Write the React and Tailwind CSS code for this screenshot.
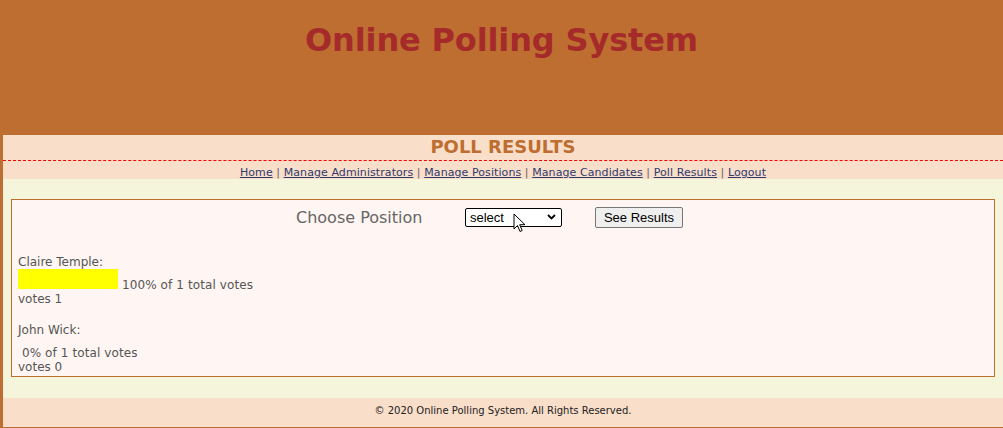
export default function App() {
  const font = { fontFamily: '"DejaVu Sans", Verdana, sans-serif' };
  const links = ["Home", "Manage Administrators", "Manage Positions", "Manage Candidates", "Poll Results", "Logout"];
  const candidates = [
    { name: "Claire Temple", pct: 100, votes: 1 },
    { name: "John Wick", pct: 0, votes: 0 },
  ];
  return (
    <div className="h-[428px] w-full overflow-hidden bg-[#bd6e30] pl-[3px] pb-[1px]" style={font}>
      <div className="-ml-[3px] h-[135px] pt-[22px] text-center">
        <h1 className="text-[32px] font-bold leading-[37px] tracking-[-0.15px] text-[#a52a2a]">Online Polling System</h1>
      </div>
      <div className="flex h-[292px] flex-col">
        <div className="bg-[#f9dec9]">
          <h2 className="h-[26px] border-b border-dashed border-[#ff0000] pt-[1px] text-center text-[18px] font-bold leading-[21px] text-[#bd6e30]">
            POLL RESULTS
          </h2>
          <div className="h-[18px] pt-[5px] text-center text-[11px] leading-[13px] tracking-[0.08px] text-[#666]">
            {links.map((l, i) => (
              <span key={l}>
                {i > 0 && <span> | </span>}
                <a href="#" className="text-[#2e3b6e] underline">{l}</a>
              </span>
            ))}
          </div>
        </div>
        <div className="flex-1 bg-[#f5f5dc] px-[8px] pt-[20px]">
          <div className="h-[178px] border border-[#bd6e30] bg-[#fff5f2] px-[6px] pt-[7px] text-[12px] text-[#555]">
            <div className="flex h-[21px] items-center justify-center pr-[27px]">
              <span className="w-[126px] whitespace-nowrap text-[16px] leading-[19px] text-[#666]">Choose Position</span>
              <div className="relative ml-[43px] h-[19px] w-[97px]">
                <select
                  className="h-[19px] w-[97px] appearance-none rounded-[2px] border border-[#000] bg-white pl-[4px] text-[13px] leading-[17px] text-black"
                  style={{ fontFamily: '"Liberation Sans", Arial, sans-serif' }}
                  defaultValue="select"
                >
                  <option value="select">select</option>
                </select>
                <svg className="pointer-events-none absolute right-[6px] top-[6px]" width="9" height="6" viewBox="0 0 9 6">
                  <path d="M1 1l3.5 3.5L8 1" fill="none" stroke="#000" strokeWidth="1.8" />
                </svg>
                <svg className="pointer-events-none absolute left-[48px] top-[5px]" width="14" height="21" viewBox="0 0 14 21">
                  <path d="M1 1v15l3.5-3.5 2.5 6 2.2-1-2.5-5.8H12z" fill="#fff" stroke="#000" strokeWidth="1" strokeLinejoin="round" />
                </svg>
              </div>
              <button
                className="ml-[33px] h-[21px] w-[88px] rounded-[2px] border border-[#767676] bg-[#efefef] text-[13px] leading-[19px] text-black"
                style={{ fontFamily: '"Liberation Sans", Arial, sans-serif' }}
              >
                See Results
              </button>
            </div>
            <div className="mt-[27px]">
              {candidates.map((c, i) => (
                <div key={c.name} className={i > 0 ? "mt-[17px]" : ""}>
                  <div className="leading-[14px]">{c.name}:</div>
                  <div className="leading-[14px] tracking-[0.1px]">
                    <span className="inline-block h-[20px] bg-[#ffff00] align-baseline" style={{ width: c.pct }}></span>
                    <span> {c.pct}% of 1 total votes</span>
                  </div>
                  <div className="leading-[14px]">votes {c.votes}</div>
                </div>
              ))}
            </div>
          </div>
        </div>
        <div className="h-[29px] bg-[#f9dec9] pt-[7px] text-center text-[10px] leading-[12px] text-[#222]">
          © 2020 Online Polling System. All Rights Reserved.
        </div>
      </div>
    </div>
  );
}
